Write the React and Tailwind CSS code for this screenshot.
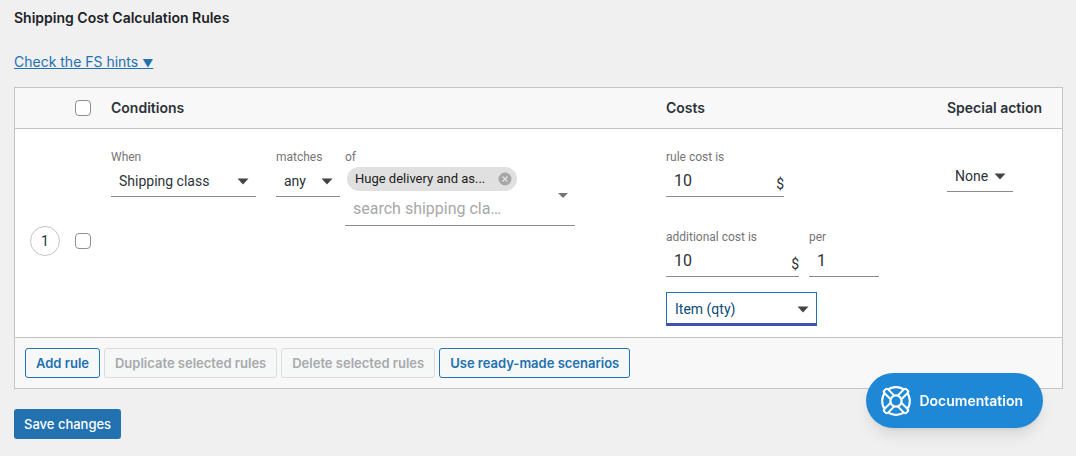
import React, { useState } from 'react'

const line = 'border-b border-[#8c8c8c]'
const th = 'text-left text-sm font-semibold text-[#2c3338]'

function Arrow({ className }) {
  return (
    <svg viewBox="0 0 12 7" className={`pointer-events-none absolute w-3 h-[7px] ${className}`}>
      <path d="M0.5 0.5h11L6 6.5z" fill="#444" />
    </svg>
  )
}

function LifeRing() {
  return (
    <svg viewBox="0 0 30 30" className="size-[30px]" fill="#1e87d6" stroke="#fff" strokeWidth="2.2">
      <circle cx="15" cy="15" r="13.8" />
      {/* straps */}
      {[45, 135, 225, 315].map(a => (
        <rect key={a} x="12.4" y="-0.6" width="5.2" height="11" rx="1.8" strokeWidth="2" transform={`rotate(${a} 15 15)`} />
      ))}
      <circle cx="15" cy="15" r="5.6" />
    </svg>
  )
}

function Label({ htmlFor, children }) {
  return (
    <label htmlFor={htmlFor} className="block h-4 text-xs leading-4 text-[#757575]">
      {children}
    </label>
  )
}

function Select({ id, label, options, className, box = line, ariaLabel }) {
  return (
    <div className={className}>
      {label && <Label htmlFor={id}>{label}</Label>}
      <div className={`relative h-8 ${box}`}>
        <select
          id={id}
          aria-label={ariaLabel}
          className="block w-full h-full appearance-none bg-transparent pt-[2px] pl-2 pr-5 text-sm outline-none"
        >
          {options.map(o => <option key={o}>{o}</option>)}
        </select>
        <Arrow className="right-[7px] top-[13px]" />
      </div>
    </div>
  )
}

function Field({ id, label, value, unit, className }) {
  return (
    <div className={className}>
      <Label htmlFor={id}>{label}</Label>
      <div className={`flex h-8 items-center ${line}`}>
        <input id={id} defaultValue={value} className="min-w-0 flex-1 pt-[2px] pl-2 text-base outline-none bg-transparent" />
        {unit && <span className="pt-2 text-sm">{unit}</span>}
      </div>
    </div>
  )
}

function Check({ label }) {
  return (
    <input
      type="checkbox"
      aria-label={label}
      className="block size-4 appearance-none rounded-[4px] border border-[#8c8f94] bg-white checked:bg-[#2271b1]"
    />
  )
}

function Button({ children, disabled }) {
  return (
    <button
      type="button"
      disabled={disabled}
      className="h-[30px] rounded-[3px] border border-[#2271b1] bg-[#f6f7f7] px-[10px] pt-[2px] text-[13px] font-semibold text-[#2271b1] disabled:border-[#dcdcde] disabled:text-[#a7aaad]"
    >
      {children}
    </button>
  )
}

export default function App() {
  const [tags, setTags] = useState(['Huge delivery and as...'])

  return (
    <div className="min-h-screen bg-[#f0f0f1] pl-[14px] pr-[13px] pt-2 pb-4 font-['Inter',sans-serif] text-[#1d2327]">
      <h2 className="text-sm leading-5 font-semibold">Shipping Cost Calculation Rules</h2>
      <p className="mt-6 text-sm leading-5">
        <a href="#hints" className="text-[#2271b1] underline">Check the FS hints <span className="text-[11px] leading-none">▼</span></a>
      </p>

      <div className="mt-[15px] border border-[#c3c4c7] bg-white">
        <table className="w-full table-fixed">
          <colgroup>
            <col className="w-[60px]" />
            <col className="w-9" />
            <col />
            <col className="w-[281px]" />
            <col className="w-[115px]" />
          </colgroup>
          <thead>
            <tr className="h-10 border-b border-[#c3c4c7] bg-[#f8f8f9]">
              <td />
              <td><Check label="Select all rules" /></td>
              <th className={th}>Conditions</th>
              <th className={th}>Costs</th>
              <th className={th}>Special action</th>
            </tr>
          </thead>
          <tbody>
            <tr className="font-['Roboto',sans-serif] text-[#2c3338]">
              <td className="pt-4">
                <div className="mx-auto flex size-[30px] items-center justify-center rounded-full border border-[#c3c4c7] text-sm">1</div>
              </td>
              <td className="pt-4"><Check label="Select rule 1" /></td>
              <td className="align-top pt-5">
                <div className="flex items-start">
                  <Select id="when" label="When" options={['Shipping class', 'Weight', 'Price']} className="mr-5 w-[145px]" />
                  <Select id="matches" label="matches" options={['any', 'all', 'none']} className="mr-[5px] w-16" />
                  <div className="w-[230px]">
                    <Label htmlFor="classes">of</Label>
                    <div className={`relative px-[2px] pt-[2px] ${line}`}>
                      {tags.map(tag => (
                        <span key={tag} className="inline-flex h-6 items-center gap-[10px] rounded-full bg-[#e0e0e0] pl-2 pr-[5px] align-top text-[13px] text-[#212121]">
                          <span className="w-[133px] truncate">{tag}</span>
                          <button
                            type="button"
                            aria-label={`Remove ${tag}`}
                            onClick={() => setTags(tags.filter(t => t !== tag))}
                          >
                            <svg viewBox="0 0 14 14" className="size-[14px]">
                              <circle cx="7" cy="7" r="6.5" fill="#a6a6a6" />
                              <path d="M4.5 4.5l5 5M9.5 4.5l-5 5" stroke="#e0e0e0" strokeWidth="1.4" />
                            </svg>
                          </button>
                        </span>
                      ))}
                      <input
                        id="classes"
                        placeholder="search shipping cla…"
                        className="block h-[34px] w-[180px] bg-transparent pt-[2px] pl-[6px] text-base outline-none placeholder:text-[#a8a8a8]"
                      />
                      <svg viewBox="0 0 10 5" className="pointer-events-none absolute right-[7px] top-7 w-[10px] h-[5px]">
                        <path d="M0 0h10L5 5z" fill="#757575" />
                      </svg>
                    </div>
                  </div>
                </div>
              </td>
              <td className="align-top pt-5 pb-[11px]">
                <Field id="cost" label="rule cost is" value="10" unit="$" className="w-[118px]" />
                <div className="mt-8 flex gap-[10px]">
                  <Field id="extra" label="additional cost is" value="10" unit="$" className="w-[133px]" />
                  <Field id="per" label="per" value="1" className="w-[70px]" />
                </div>
                <Select
                  ariaLabel="Additional cost unit"
                  options={['Item (qty)', 'Weight', 'Value']}
                  className="mt-[15px] w-[151px] text-[#0a4b78]"
                  box="box-content border border-b-[3px] border-[#2271b1] border-b-[#3f51b5] h-[30px]"
                />
              </td>
              <td className="align-top pt-[31px]">
                <Select ariaLabel="Special action" options={['None', 'Stop', 'Cancel']} className="w-[66px]" />
              </td>
            </tr>
          </tbody>
          <tfoot>
            <tr className="border-t border-[#c3c4c7] bg-[#f8f8f9]">
              <td colSpan={5} className="p-[10px]">
                <div className="flex flex-wrap gap-1">
                  <Button>Add rule</Button>
                  <Button disabled>Duplicate selected rules</Button>
                  <Button disabled>Delete selected rules</Button>
                  <Button>Use ready-made scenarios</Button>
                </div>
              </td>
            </tr>
          </tfoot>
        </table>
      </div>

      <button type="submit" className="mt-5 block h-[30px] rounded-[3px] bg-[#2271b1] px-[10px] pt-[2px] text-[13px] font-medium text-white">
        Save changes
      </button>

      <a
        href="#docs"
        className="fixed right-[33px] bottom-7 flex h-[55px] items-center gap-2 rounded-full bg-[#1e87d6] pl-[15px] pr-5 text-sm font-semibold text-white shadow-lg"
      >
        <LifeRing />
        Documentation
      </a>
    </div>
  )
}
